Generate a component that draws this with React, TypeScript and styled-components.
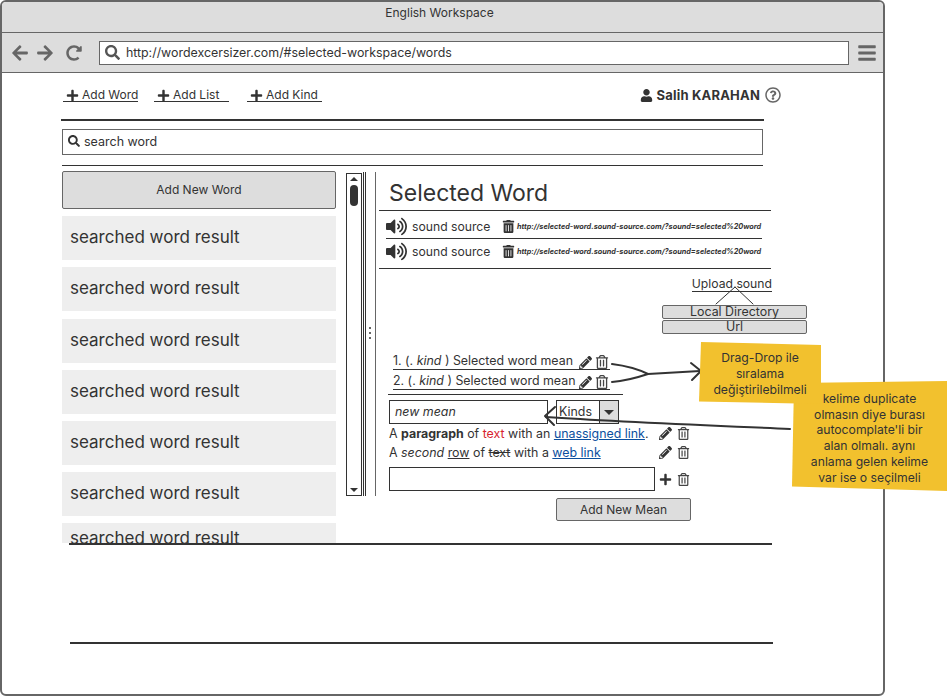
import React from 'react';
import styled, { createGlobalStyle } from 'styled-components';
import {
  FaArrowLeft,
  FaArrowRight,
  FaBars,
  FaPencilAlt,
  FaPlus,
  FaRedoAlt,
  FaRegQuestionCircle,
  FaRegTrashAlt,
  FaSearch,
  FaTrashAlt,
  FaUser,
  FaVolumeUp,
} from 'react-icons/fa';

const results = Array.from({ length: 7 }, (_, i) => i);

const SOUND_URL = 'http://selected-word.sound-source.com/?sound=selected%20word';

const App = () => {
  return (
    <>
      <GlobalStyle />
      <Page>
        <Window>
          <TitleBar>English Workspace</TitleBar>
          <AddressBar>
            <NavIcons>
              <FaArrowLeft />
              <FaArrowRight />
              <FaRedoAlt />
            </NavIcons>
            <UrlField>
              <FaSearch />
              http://wordexcersizer.com/#selected-workspace/words
            </UrlField>
            <MenuButton>
              <FaBars />
            </MenuButton>
          </AddressBar>
          <Content>
            <TopRow>
              <AddLink><FaPlus />Add Word</AddLink>
              <AddLink $gap={16}><FaPlus />Add List</AddLink>
              <AddLink $gap={18}><FaPlus />Add Kind</AddLink>
              <UserBox>
                <FaUser />
                <UserName>Salih KARAHAN</UserName>
                <HelpIcon />
              </UserBox>
            </TopRow>
            <ThickRule />
            <SearchField>
              <FaSearch />
              search word
            </SearchField>
            <ThinRule />
            <Main>
              <LeftColumn>
                <AddWordButton>Add New Word</AddWordButton>
                <ResultList>
                  {results.map((i) => (
                    <ResultItem key={i} $cut={i === results.length - 1}>
                      searched word result
                    </ResultItem>
                  ))}
                </ResultList>
              </LeftColumn>
              <ScrollBar>
                <ScrollArrow />
                <ScrollThumb />
                <ScrollArrow $down />
              </ScrollBar>
              <Splitter>
                <SplitterDots>
                  <i />
                  <i />
                  <i />
                </SplitterDots>
              </Splitter>
              <Panel>
                <Heading>Selected Word</Heading>
                <SoundRow $height={28}>
                  <SpeakerIcon />
                  <SoundName>sound source</SoundName>
                  <FaTrashAlt />
                  <SoundUrl>{SOUND_URL}</SoundUrl>
                </SoundRow>
                <SoundRow $height={30} $last>
                  <SpeakerIcon />
                  <SoundName>sound source</SoundName>
                  <FaTrashAlt />
                  <SoundUrl>{SOUND_URL}</SoundUrl>
                </SoundRow>
                <Upload>
                  <UploadLink>Upload sound</UploadLink>
                  <UploadButton>Local Directory</UploadButton>
                  <UploadButton>Url</UploadButton>
                </Upload>
                <MeanRow>
                  <MeanText>1. (. <em>kind</em> ) Selected word mean</MeanText>
                  <RowIcons>
                    <FaPencilAlt />
                    <TrashIcon />
                  </RowIcons>
                </MeanRow>
                <MeanRow>
                  <MeanText>2. (. <em>kind</em> ) Selected word mean</MeanText>
                  <RowIcons>
                    <FaPencilAlt />
                    <TrashIcon />
                  </RowIcons>
                </MeanRow>
                <MeanRule />
                <MeanForm>
                  <MeanInput>new mean</MeanInput>
                  <KindSelect>
                    Kinds
                    <KindCaret />
                  </KindSelect>
                </MeanForm>
                <ParagraphRow>
                  <Paragraph>
                    A <b>paragraph</b> of <RedText>text</RedText> with an <WebLink>unassigned link</WebLink>.
                  </Paragraph>
                  <FaPencilAlt />
                  <TrashIcon />
                </ParagraphRow>
                <ParagraphRow>
                  <Paragraph>
                    A <em>second</em> <u>row</u> of <s>text</s> with a <WebLink>web link</WebLink>
                  </Paragraph>
                  <FaPencilAlt />
                  <TrashIcon />
                </ParagraphRow>
                <AddMeanRow>
                  <BlankInput />
                  <FaPlus />
                  <TrashIcon />
                </AddMeanRow>
                <AddMeanButton>Add New Mean</AddMeanButton>
              </Panel>
            </Main>
            <BottomRule $left={7} />
            <BottomRule $left={8} $top={97} />
          </Content>
        </Window>

        <Wires viewBox="0 0 948 696">
          <path d="M735 287 L716 304 M735 287 L753 304" strokeWidth="1" />
          <path d="M612 364 C628 366 640 370 648 374 C636 378 625 381 612 382 M648 374 L700 371" strokeWidth="2" />
          <path d="M691 363 L701 371 L692 380" strokeWidth="2" />
          <path d="M790 429 C700 425 620 422 546 417" strokeWidth="2" />
          <path d="M555 407 L545 416 L554 425" strokeWidth="2" />
        </Wires>

        <DuplicateNote>
          kelime duplicate
          <br />
          olmasın diye burası
          <br />
          autocomplate'li bir
          <br />
          alan olmalı. aynı
          <br />
          anlama gelen kelime
          <br />
          var ise o seçilmeli
        </DuplicateNote>
        <DragNote>
          Drag-Drop ile
          <br />
          sıralama
          <br />
          değiştirilebilmeli
        </DragNote>
      </Page>
    </>
  );
};

export default App;

const SpeakerIcon = () => <SpeakerGlyph />;
const TrashIcon = () => <TrashGlyph />;

const GlobalStyle = createGlobalStyle`
  body {
    margin: 0;
    background: #fff;
    color: #333;
    font-family: Inter, "Noto Sans", sans-serif;
  }
`;

const Page = styled.div`
  position: relative;
  width: 948px;
  height: 696px;
  overflow: hidden;
`;

const Window = styled.div`
  box-sizing: border-box;
  width: 885px;
  height: 696px;
  border: 2px solid #666;
  border-radius: 6px;
  display: flex;
  flex-direction: column;
`;

const TitleBar = styled.div`
  box-sizing: border-box;
  height: 31px;
  padding: 3px 6px 0 0;
  background: #ddd;
  border-bottom: 1px solid #666;
  border-radius: 4px 4px 0 0;
  text-align: center;
  font-size: 12px;
  line-height: 16px;
`;

const AddressBar = styled.div`
  box-sizing: border-box;
  height: 40px;
  background: #ddd;
  border-bottom: 1px solid #666;
  display: flex;
  align-items: center;
  padding: 0 6px 0 9px;
`;

const NavIcons = styled.div`
  width: 88px;
  display: flex;
  align-items: center;
  gap: 7px;
  color: #666;
  font-size: 18px;

  svg:last-child {
    margin-left: 5px;
    font-size: 16px;
  }
`;

const UrlField = styled.div`
  box-sizing: border-box;
  width: 751px;
  height: 24px;
  background: #fff;
  border: 1px solid #666;
  display: flex;
  align-items: center;
  gap: 6px;
  padding-left: 5px;
  font-size: 12.4px;

  svg {
    font-size: 15px;
    color: #555;
  }
`;

const MenuButton = styled.div`
  margin-left: 8px;
  color: #666;
  font-size: 20px;
  display: flex;
`;

const Content = styled.div`
  padding-left: 60px;
  width: 701px;
`;

const TopRow = styled.div`
  height: 46px;
  display: flex;
  align-items: flex-start;
  padding: 15px 0 0 1px;
  box-sizing: border-box;
`;

const AddLink = styled.a<{ $gap?: number }>`
  box-sizing: border-box;
  width: 75px;
  height: 14px;
  margin-left: ${(p) => p.$gap ?? 0}px;
  border-bottom: 1px solid #333;
  display: flex;
  align-items: center;
  gap: 3px;
  padding: 1px 0 0 3px;
  font-size: 12px;
  line-height: 14px;
  color: #333;
  white-space: nowrap;

  svg {
    font-size: 13px;
    flex: none;
  }
`;

const UserBox = styled.div`
  margin-left: auto;
  margin-right: -18px;
  display: flex;
  align-items: center;
  gap: 3px;
  font-size: 13px;
  height: 14px;
  white-space: nowrap;
`;

const UserName = styled.b`
  font-weight: 700;
  letter-spacing: 0.2px;
`;

const HelpIcon = styled(FaRegQuestionCircle)`
  margin-left: 2px;
  font-size: 16px;
  color: #666;
`;

const ThickRule = styled.div`
  margin-left: -1px;
  width: 703px;
  height: 2px;
  background: #333;
`;

const SearchField = styled.div`
  box-sizing: border-box;
  margin-top: 8px;
  height: 26px;
  border: 1px solid #666;
  display: flex;
  align-items: center;
  gap: 4px;
  padding: 0 0 2px 5px;
  font-size: 12.5px;

  svg {
    font-size: 12px;
  }
`;

const ThinRule = styled.div`
  margin-top: 10px;
  height: 1px;
  background: #333;
`;

const Main = styled.div`
  margin-top: 5px;
  height: 372px;
  display: flex;
  align-items: flex-start;
`;

const LeftColumn = styled.div`
  width: 274px;
  height: 372px;
  overflow: hidden;
  flex: none;
`;

const AddWordButton = styled.div`
  box-sizing: border-box;
  height: 38px;
  background: #ddd;
  border: 1px solid #666;
  border-radius: 2px;
  text-align: center;
  font-size: 12px;
  line-height: 35px;
`;

const ResultList = styled.div`
  margin-top: 7px;
  display: flex;
  flex-direction: column;
  gap: 7.25px;
`;

const ResultItem = styled.div<{ $cut?: boolean }>`
  box-sizing: border-box;
  height: ${(p) => (p.$cut ? 20 : 44)}px;
  margin-top: ${(p) => (p.$cut ? -1 : 0)}px;
  flex: none;
  background: #eee;
  padding-left: 8px;
  font-size: 17px;
  line-height: ${(p) => (p.$cut ? 30 : 42)}px;
`;

const ScrollBar = styled.div`
  box-sizing: border-box;
  flex: none;
  width: 16px;
  height: 323px;
  margin: 2px 0 0 10px;
  border: 1px solid #333;
  display: flex;
  flex-direction: column;
  align-items: center;
  padding: 3px 0;
`;

const ScrollArrow = styled.div<{ $down?: boolean }>`
  width: 0;
  height: 0;
  border-left: 4px solid transparent;
  border-right: 4px solid transparent;
  ${(p) => (p.$down ? 'border-top: 4px solid #333; margin-top: auto;' : 'border-bottom: 4px solid #333;')}
`;

const ScrollThumb = styled.div`
  width: 8px;
  height: 21px;
  margin-top: 4px;
  border-radius: 4px;
  background: #333;
`;

const Splitter = styled.div`
  box-sizing: border-box;
  flex: none;
  position: relative;
  width: 13px;
  height: 324px;
  margin: 1px 3px 0 1px;
  border-left: 1px solid #333;
  border-right: 1px solid #666;
  box-shadow: inset 1px 0 0 #fff, inset 2px 0 0 #333;
`;

const SplitterDots = styled.div`
  position: absolute;
  left: 5px;
  top: 155px;
  display: flex;
  flex-direction: column;
  gap: 3px;

  i {
    width: 2px;
    height: 2px;
    background: #666;
  }
`;

const Panel = styled.div`
  flex: none;
  width: 428px;
  font-size: 12.4px;
`;

const Heading = styled.div`
  box-sizing: border-box;
  width: 392px;
  height: 40px;
  border-bottom: 1px solid #333;
  padding-left: 10px;
  font-size: 23px;
  line-height: 44px;
`;

const SoundRow = styled.div<{ $height: number; $last?: boolean }>`
  box-sizing: border-box;
  height: ${(p) => p.$height}px;
  margin-left: ${(p) => (p.$last ? 0 : 7)}px;
  width: ${(p) => (p.$last ? 392 : 376)}px;
  padding: ${(p) => (p.$last ? '0 0 5px 7px' : '3px 0 0')};
  border-bottom: 1px solid #333;
  display: flex;
  align-items: center;

  & > svg:last-of-type {
    margin-left: 11px;
    font-size: 13px;
    flex: none;
  }
`;

const SpeakerGlyph = styled(FaVolumeUp)`
  font-size: 21px;
  flex: none;
`;

const SoundName = styled.span`
  margin-left: 5px;
  width: 79px;
  flex: none;
  font-size: 12.2px;
  white-space: nowrap;
`;

const SoundUrl = styled.span`
  margin-left: 2px;
  font-size: 7.3px;
  font-style: italic;
  font-weight: 700;
  white-space: nowrap;
`;

const Upload = styled.div`
  display: flex;
  flex-direction: column;
  align-items: flex-end;
  height: 83px;
`;

const UploadLink = styled.a`
  margin: 7px 35px 0 0;
  height: 15px;
  line-height: 16px;
  font-size: 12.2px;
  border-bottom: 1px solid #333;
  color: #333;
`;

const UploadButton = styled.div`
  box-sizing: border-box;
  width: 145px;
  height: 14px;
  margin-top: 1px;
  background: #ddd;
  border: 1px solid #666;
  border-radius: 2px;
  text-align: center;
  line-height: 12px;

  &:nth-child(2) {
    margin-top: 13px;
  }
`;

const MeanRow = styled.div`
  box-sizing: border-box;
  width: 218px;
  height: 20px;
  margin-left: 14px;
  display: flex;
  align-items: center;
`;

const MeanText = styled.span`
  flex: 1;
  min-width: 0;
  height: 15px;
  line-height: 14px;
  border-bottom: 1px solid #333;
  white-space: nowrap;
`;

const RowIcons = styled.span`
  display: flex;
  align-items: center;
  gap: 3px;
  margin: 0 2px 0 -31px;
  font-size: 13px;
`;

const MeanRule = styled.div`
  margin: 2px 0 0 9px;
  width: 235px;
  height: 1px;
  background: #333;
`;

const MeanForm = styled.div`
  display: flex;
  margin: 5px 0 0 10px;
`;

const MeanInput = styled.div`
  box-sizing: border-box;
  width: 159px;
  height: 24px;
  border: 1px solid #333;
  padding-left: 5px;
  font-style: italic;
  line-height: 22px;
`;

const KindSelect = styled.div`
  box-sizing: border-box;
  position: relative;
  width: 63px;
  height: 24px;
  margin-left: 8px;
  border: 1px solid #333;
  padding-left: 2px;
  line-height: 22px;
`;

const KindCaret = styled.span`
  position: absolute;
  top: 0;
  right: 0;
  width: 19px;
  height: 22px;
  box-sizing: border-box;
  background: #ddd;
  border-left: 1px solid #333;

  &::after {
    content: '';
    position: absolute;
    left: 4px;
    top: 9px;
    border-left: 5px solid transparent;
    border-right: 5px solid transparent;
    border-top: 5px solid #333;
  }
`;

const ParagraphRow = styled.div`
  width: 301px;
  height: 19px;
  margin-left: 10px;
  display: flex;
  align-items: center;
  font-size: 12.4px;

  & > svg {
    flex: none;
    font-size: 13px;
    margin-left: 5px;
  }

  & > svg:first-of-type {
    margin-left: auto;
  }
`;

const Paragraph = styled.span`
  white-space: nowrap;
`;

const RedText = styled.span`
  color: #d8232f;
`;

const WebLink = styled.a`
  color: #0b4f9e;
  text-decoration: underline;
`;

const AddMeanRow = styled.div`
  display: flex;
  align-items: center;
  width: 302px;
  margin: 5px 0 0 10px;

  & > svg {
    flex: none;
    font-size: 13px;
    margin-left: 5px;
  }
`;

const BlankInput = styled.div`
  box-sizing: border-box;
  width: 266px;
  height: 24px;
  border: 1px solid #333;
  margin-right: -1px;
`;

const AddMeanButton = styled.div`
  box-sizing: border-box;
  width: 135px;
  height: 23px;
  margin: 7px 0 0 177px;
  background: #ddd;
  border: 1px solid #666;
  border-radius: 2px;
  text-align: center;
  font-size: 12px;
  line-height: 21px;
`;

const TrashGlyph = styled(FaRegTrashAlt)`
  color: #444;
  font-size: 14px;
`;

const BottomRule = styled.div<{ $left: number; $top?: number }>`
  margin: ${(p) => p.$top ?? 0}px 0 0 ${(p) => p.$left}px;
  width: 703px;
  height: 2px;
  background: #333;
`;

const Wires = styled.svg`
  position: absolute;
  inset: 0;
  width: 948px;
  height: 696px;
  fill: none;
  stroke: #333;
  stroke-linecap: round;
  stroke-linejoin: round;
  pointer-events: none;
`;

const DragNote = styled.div`
  position: absolute;
  left: 699px;
  top: 342px;
  box-sizing: border-box;
  width: 122px;
  height: 62px;
  padding-top: 8px;
  background: #f2c12e;
  clip-path: polygon(2px 0, 100% 3px, 100% 100%, 0 96%);
  text-align: center;
  font-size: 12.2px;
  line-height: 16px;
  white-space: nowrap;
`;

const DuplicateNote = styled.div`
  position: absolute;
  left: 792px;
  top: 381px;
  box-sizing: border-box;
  width: 155px;
  height: 110px;
  padding-top: 10px;
  background: #f2c12e;
  clip-path: polygon(2px 2px, 100% 0, 100% 100%, 0 96%);
  text-align: center;
  font-size: 12.2px;
  line-height: 15.7px;
  white-space: nowrap;
`;
